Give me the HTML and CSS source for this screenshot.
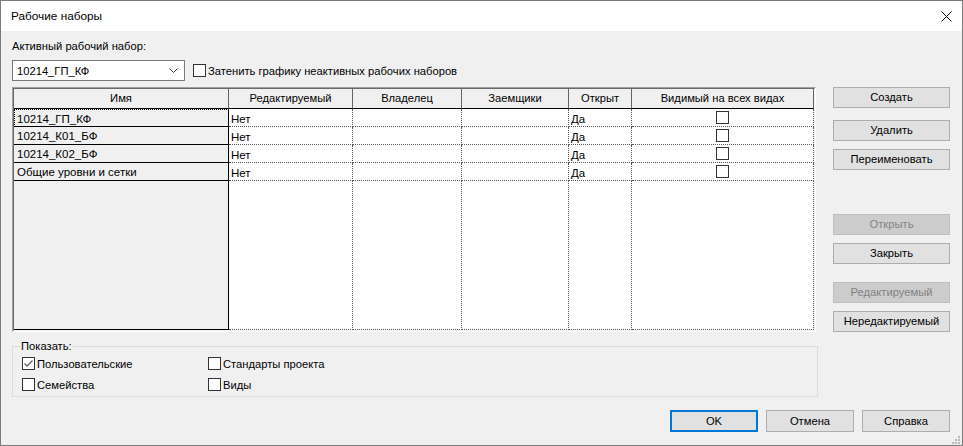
FILE: index.html
```html
<!DOCTYPE html>
<html lang="ru">
<head>
<meta charset="utf-8">
<title>Рабочие наборы</title>
<link rel="stylesheet" href="styles.css">
</head>
<body>
<div class="window">
  <div class="titlebar">
    <span class="title">Рабочие наборы</span>
    <svg class="close" width="11" height="11" viewBox="0 0 11 11"><path d="M0.5 0.5 L10.5 10.5 M10.5 0.5 L0.5 10.5" stroke="#000" stroke-width="1"/></svg>
  </div>
  <div class="content">
    <div class="label">Активный рабочий набор:</div>
    <div class="toprow">
      <div class="combo">
        <span class="combo-text">10214_ГП_КФ</span>
        <svg class="chev" width="9" height="5" viewBox="0 0 9 5"><path d="M0.5 0.5 L4.5 4.5 L8.5 0.5" fill="none" stroke="#333" stroke-width="1"/></svg>
      </div>
      <div class="check shade"><span class="box"></span><span>Затенить графику неактивных рабочих наборов</span></div>
    </div>
    <div class="mainrow">
      <div class="table">
        <div class="grid">
          <div class="col col-name">
            <div class="hcell">Имя</div>
            <div class="ncell focus">10214_ГП_КФ</div>
            <div class="ncell">10214_К01_БФ</div>
            <div class="ncell">10214_К02_БФ</div>
            <div class="ncell">Общие уровни и сетки</div>
            <div class="nfill"></div>
          </div>
          <div class="col col-edit">
            <div class="hcell">Редактируемый</div>
            <div class="dcell">Нет</div>
            <div class="dcell">Нет</div>
            <div class="dcell">Нет</div>
            <div class="dcell">Нет</div>
            <div class="dfill"></div>
          </div>
          <div class="col col-owner">
            <div class="hcell">Владелец</div>
            <div class="dcell"></div>
            <div class="dcell"></div>
            <div class="dcell"></div>
            <div class="dcell"></div>
            <div class="dfill"></div>
          </div>
          <div class="col col-borrow">
            <div class="hcell">Заемщики</div>
            <div class="dcell"></div>
            <div class="dcell"></div>
            <div class="dcell"></div>
            <div class="dcell"></div>
            <div class="dfill"></div>
          </div>
          <div class="col col-open">
            <div class="hcell">Открыт</div>
            <div class="dcell">Да</div>
            <div class="dcell">Да</div>
            <div class="dcell">Да</div>
            <div class="dcell">Да</div>
            <div class="dfill"></div>
          </div>
          <div class="col col-vis">
            <div class="hcell">Видимый на всех видах</div>
            <div class="dcell center"><span class="box"></span></div>
            <div class="dcell center"><span class="box"></span></div>
            <div class="dcell center"><span class="box"></span></div>
            <div class="dcell center"><span class="box"></span></div>
            <div class="dfill"></div>
          </div>
        </div>
      </div>
      <div class="side">
        <div class="btn">Создать</div>
        <div class="btn gap-a">Удалить</div>
        <div class="btn gap-s">Переименовать</div>
        <div class="btn disabled gap-l">Открыть</div>
        <div class="btn gap-s">Закрыть</div>
        <div class="btn disabled gap-m">Редактируемый</div>
        <div class="btn gap-s">Нередактируемый</div>
      </div>
    </div>
    <fieldset class="group">
      <legend>Показать:</legend>
      <div class="opts">
        <div class="check"><span class="box checked"><svg width="11" height="11" viewBox="0 0 11 11"><path d="M1.5 5.5 L4 8 L9.5 2.5" fill="none" stroke="#666" stroke-width="1.3"/></svg></span><span>Пользовательские</span></div>
        <div class="check"><span class="box"></span><span>Стандарты проекта</span></div>
        <div class="check"><span class="box"></span><span>Семейства</span></div>
        <div class="check"><span class="box"></span><span>Виды</span></div>
      </div>
    </fieldset>
    <div class="footer">
      <div class="btn fbtn default">OK</div>
      <div class="btn fbtn">Отмена</div>
      <div class="btn fbtn">Справка</div>
    </div>
    <svg class="grip" width="8" height="8" viewBox="0 0 8 8">
      <rect x="6" y="0" width="2" height="2" fill="#b8b8b8"/>
      <rect x="3" y="3" width="2" height="2" fill="#b8b8b8"/>
      <rect x="6" y="3" width="2" height="2" fill="#b8b8b8"/>
      <rect x="0" y="6" width="2" height="2" fill="#b8b8b8"/>
      <rect x="3" y="6" width="2" height="2" fill="#b8b8b8"/>
      <rect x="6" y="6" width="2" height="2" fill="#b8b8b8"/>
    </svg>
  </div>
</div>
</body>
</html>
```
FILE: styles.css
```css
* { box-sizing: border-box; }
html, body { margin: 0; padding: 0; background: #f0f0f0; }
body {
  font-family: "Liberation Sans", Arial, sans-serif;
  font-size: 11.2px;
  color: #000;
}
.window {
  width: 963px;
  height: 446px;
  border: 1px solid #7a7a7a;
  background: #f0f0f0;
  display: flex;
  flex-direction: column;
}
.titlebar {
  height: 30px;
  background: #fff;
  display: flex;
  align-items: center;
  padding: 0 10px 0 10px;
  flex: none;
}
.title { flex: 1; font-size: 11.8px; }
.close { display: block; }
.content {
  flex: 1;
  padding: 7px 12px 0 11px;
  display: flex;
  flex-direction: column;
  position: relative;
}
.label { line-height: 16px; height: 16px; }
.toprow {
  display: flex;
  align-items: center;
  margin-top: 6px;
  height: 21px;
}
.combo {
  width: 173px;
  height: 21px;
  background: #fff;
  border: 1px solid #7a7a7a;
  display: flex;
  align-items: center;
  padding: 0 6px 0 4px;
}
.combo-text { flex: 1; }
.chev { display: block; }
.check {
  display: flex;
  align-items: center;
  gap: 2px;
  height: 15px;
}
.shade { margin-left: 8px; }
.box {
  width: 13px;
  height: 13px;
  background: #fff;
  border: 1px solid #333;
  display: inline-flex;
  align-items: center;
  justify-content: center;
  flex: none;
}
.box.checked svg { display: block; }
.mainrow {
  display: flex;
  margin-top: 6px;
  align-items: flex-start;
}
.table {
  width: 804px;
  height: 245px;
  border: 1px solid;
  border-color: #a0a0a0 #ffffff #ffffff #a0a0a0;
}
.grid {
  height: 100%;
  display: flex;
  border: 1px solid;
  border-color: #696969 #f0f0f0 #f0f0f0 #696969;
  background: #fff;
}
.col {
  display: flex;
  flex-direction: column;
  height: 100%;
  flex: none;
}
.col-name { width: 215px; background: #f0f0f0; border-bottom: 1px solid #000; }
.col-edit { width: 124px; }
.col-owner { width: 109px; }
.col-borrow { width: 107px; }
.col-open { width: 63px; }
.col-vis { width: 182px; }
.hcell {
  height: 20px;
  background: #f0f0f0;
  border-bottom: 1px solid #000;
  border-right: 1px solid #646464;
  text-align: center;
  line-height: 19px;
  flex: none;
}
.ncell, .dcell {
  height: 18px;
  font-family: "Liberation Sans", Arial, sans-serif;
  font-size: 11.5px;
  line-height: 18px;
  flex: none;
  white-space: nowrap;
}
.ncell {
  border-bottom: 1px solid #000;
  border-right: 1px solid #000;
  padding-left: 3px;
}
.ncell.focus {
  border: 1px dotted #000;
  border-right: 1px solid #000;
  border-bottom: 1px solid #000;
  padding-left: 2px;
}
.nfill { flex: 1; border-right: 1px solid #000; }
.dcell {
  border-bottom: 1px dotted #555;
  border-right: 1px dotted #555;
  padding-left: 2px;
  padding-top: 1px;
}
.dcell.center {
  display: flex;
  align-items: center;
  justify-content: center;
  padding: 0;
}
.dfill { flex: 1; border-right: 1px dotted #555; border-bottom: 1px dotted #555; }
.side {
  margin-left: auto;
  width: 117px;
  display: flex;
  flex-direction: column;
}
.btn {
  height: 21px;
  background: #e1e1e1;
  border: 1px solid #adadad;
  text-align: center;
  line-height: 19px;
  white-space: nowrap;
}
.btn.disabled { background: #cccccc; border-color: #bfbfbf; color: #838383; }
.gap-a { margin-top: 12px; }
.gap-s { margin-top: 8px; }
.gap-l { margin-top: 44px; }
.gap-m { margin-top: 18px; }
.group {
  margin: 7px 0 0 0;
  width: 806px;
  border: 1px solid #dcdcdc;
  padding: 0 0 0 9px;
  height: 58px;
}
.group legend {
  padding: 0 1px;
  margin-left: -2px;
  line-height: 15px;
}
.opts {
  display: grid;
  grid-template-columns: 186px auto;
  row-gap: 6px;
  margin-top: 2px;
}
.footer {
  display: flex;
  justify-content: flex-end;
  gap: 8px;
  margin-top: 13px;
}
.fbtn { width: 88px; height: 22px; line-height: 20px; }
.fbtn.default { border: 2px solid #0078d7; line-height: 18px; }
.grip { position: absolute; right: 2px; bottom: 1px; }
```
